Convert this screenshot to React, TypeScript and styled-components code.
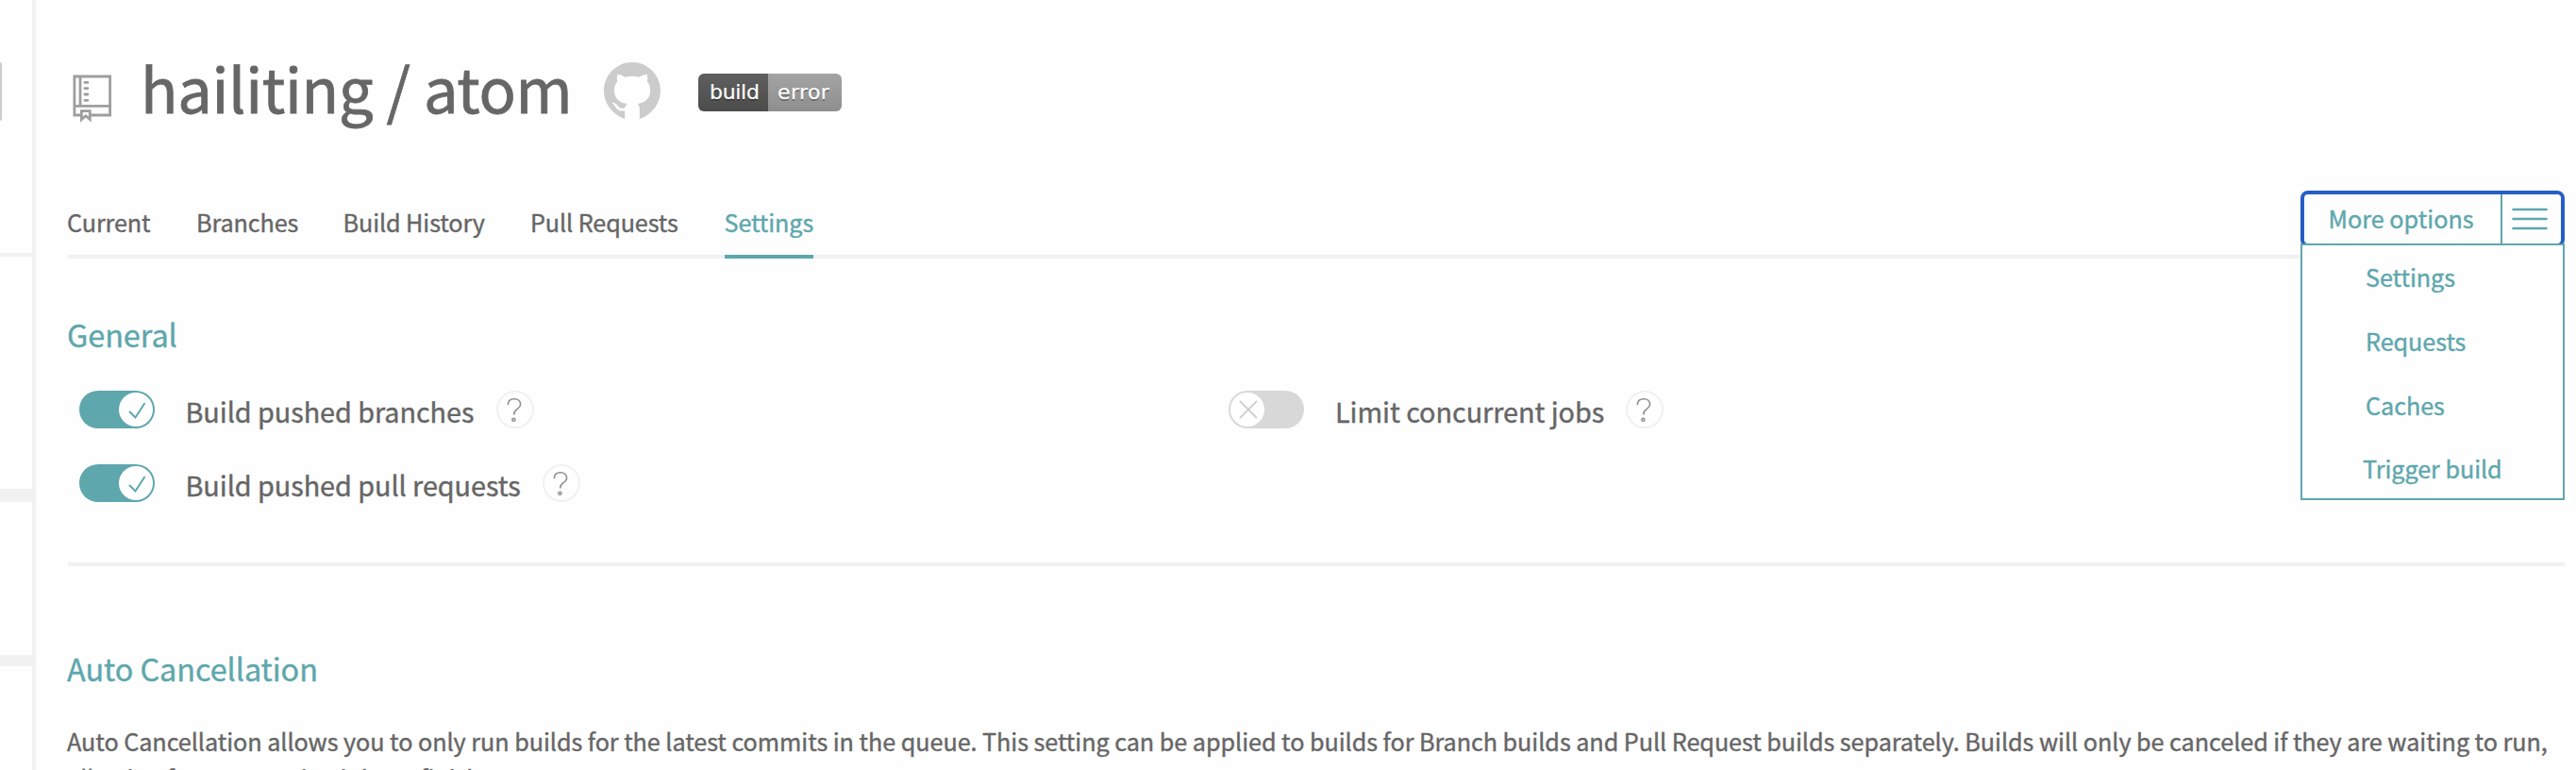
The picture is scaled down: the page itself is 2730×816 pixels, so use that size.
import React from 'react';
import styled, { createGlobalStyle, css } from 'styled-components';

const teal = '#5ea7ad';
const line = '#f1f1f1';
const ink = '#666666';

const GlobalStyle = createGlobalStyle`
  * { box-sizing: border-box; }
  html, body { margin: 0; padding: 0; background: #fefefe; overflow: hidden; }
  body {
    font-family: "Noto Sans CJK SC", "Noto Sans", sans-serif;
    font-size: 25.2px;
    color: ${ink};
    -webkit-text-stroke: 0.4px currentColor;
  }
`;

const Page = styled.div`
  display: flex;
  width: 2730px;
  height: 816px;
  overflow: hidden;
`;

const Sidebar = styled.aside`
  display: flex;
  flex-direction: column;
  flex: none;
  width: 38px;
  border-right: 4px solid ${line};
`;

const SidebarCard = styled.div<{ $height: number; $rule: number }>`
  flex: none;
  height: ${(p) => p.$height}px;
  border-bottom: ${(p) => p.$rule}px solid ${line};
`;

const SidebarButton = styled.div`
  width: 2px;
  height: 62px;
  margin-top: 66px;
  border-radius: 0 2px 2px 0;
  background: #cccccc;
`;

const Main = styled.main`
  flex: none;
  width: 2680px;
  padding: 0 0 0 34px;
`;

const Header = styled.header`
  display: flex;
  align-items: flex-start;
  height: 202px;
  padding-left: 5px;
`;

const BookIcon = styled.svg`
  flex: none;
  width: 40px;
  height: 50px;
  margin-top: 79px;
  overflow: visible;
  fill: none;
  stroke: #9e9e9e;
`;

const Title = styled.h1`
  width: 491px;
  margin: 47px 0 0 32px;
  font-size: 65px;
  line-height: 90px;
  font-weight: 400;
  letter-spacing: -0.3px;
  white-space: nowrap;
  -webkit-text-stroke-width: 0.8px;
`;

const GithubMark = styled.svg`
  flex: none;
  width: 60px;
  height: 60px;
  margin-top: 66px;
  fill: #cccccc;
`;

const Badge = styled.div`
  display: flex;
  width: 152px;
  height: 40px;
  margin: 78px 0 0 40px;
  border-radius: 6px;
  overflow: hidden;
  font-family: "DejaVu Sans", sans-serif;
  font-size: 22px;
  line-height: 40px;
  color: #ffffff;
  text-shadow: 0 2px 0 rgba(1, 1, 1, 0.3);
  -webkit-text-stroke-width: 0.2px;
`;

const BadgePart = styled.span<{ $dark?: boolean }>`
  width: ${(p) => (p.$dark ? 74 : 78)}px;
  padding-left: ${(p) => (p.$dark ? 12 : 10)}px;
  letter-spacing: ${(p) => (p.$dark ? -0.3 : 0.4)}px;
  background: ${(p) =>
    p.$dark ? 'linear-gradient(#606060, #4c4c4c)' : 'linear-gradient(#a4a4a4, #8e8e8e)'};
`;

const Nav = styled.nav`
  display: flex;
  justify-content: space-between;
  width: 2646px;
  height: 72px;
  border-bottom: 4px solid ${line};
`;

const Tabs = styled.div`
  display: grid;
  grid-template-columns: 137px 155.5px 198.5px 205px 94px;
  padding-top: 13px;
`;

const Tab = styled.a<{ $active?: boolean }>`
  height: 59px;
  margin-left: -1px;
  line-height: 40px;
  letter-spacing: -0.1px;
  white-space: nowrap;
  ${(p) =>
    p.$active &&
    css`
      margin-left: 0;
      color: ${teal};
      text-indent: -0.5px;
      border-bottom: 4px solid ${teal};
    `}
`;

const Options = styled.div`
  position: relative;
  width: 280px;
  color: ${teal};
`;

const OptionsButton = styled.button`
  display: flex;
  width: 280px;
  height: 60px;
  padding: 0;
  border: 4px solid #265ec4;
  border-radius: 8px;
  background: #fefefe;
  color: inherit;
  font: inherit;
  line-height: 51px;
  text-align: left;
`;

const OptionsLabel = styled.span`
  width: 210px;
  height: 52px;
  padding-left: 25.5px;
  border-right: 2px solid ${teal};
`;

const MenuIcon = styled.svg`
  width: 38px;
  height: 26px;
  margin: 13px 0 0 10px;
  stroke: ${teal};
  stroke-width: 2.6;
  stroke-linecap: round;
`;

const OptionsMenu = styled.ul`
  position: absolute;
  top: 56px;
  left: 0;
  width: 280px;
  height: 272px;
  margin: 0;
  padding: 13px 0 0 67px;
  list-style: none;
  border: 2px solid ${teal};
  background: #fefefe;
`;

const OptionsItem = styled.li<{ $last?: boolean }>`
  height: 68px;
  line-height: 40px;
  letter-spacing: -0.06px;
  white-space: nowrap;
  margin: ${(p) => (p.$last ? '-1px 0 0 -3px' : '0')};
`;

const General = styled.section`
  width: 2646px;
  height: 326px;
  padding-top: 60px;
  border-bottom: 4px solid ${line};
`;

const SectionTitle = styled.h2`
  margin: 0 0 0 -1px;
  font-size: 32.4px;
  line-height: 40px;
  letter-spacing: -0.05px;
  font-weight: 400;
  color: ${teal};
`;

const Settings = styled.div`
  display: grid;
  grid-template-columns: 1218px 1fr;
  row-gap: 38px;
  padding: 40px 0 0 12px;
`;

const Setting = styled.div`
  display: flex;
  height: 40px;
`;

const Switch = styled.button<{ $on?: boolean }>`
  display: flex;
  justify-content: ${(p) => (p.$on ? 'flex-end' : 'flex-start')};
  width: 80px;
  height: 40px;
  margin-right: ${(p) => (p.$on ? 0.5 : 1)}px;
  padding: 2px;
  border: 0;
  border-radius: 20px;
  background: ${(p) => (p.$on ? teal : '#d8d8d8')};
`;

const Knob = styled.svg<{ $on?: boolean }>`
  width: 36px;
  height: 36px;
  border-radius: 50%;
  background: #ffffff;
  fill: none;
  stroke: ${(p) => (p.$on ? teal : '#d0d0d0')};
  stroke-width: 2;
`;

const SettingLabel = styled.span`
  margin: 0 23.4px 0 32px;
  font-size: 28.8px;
  line-height: 43px;
  letter-spacing: -0.05px;
  white-space: nowrap;
`;

const Help = styled.svg`
  width: 40px;
  height: 40px;
  fill: none;
  stroke: #8f8f8f;
  stroke-width: 1.6;
`;

const AutoCancellation = styled.section`
  width: 2660px;
  padding-top: 88px;
`;

const Copy = styled.p`
  margin: 38px 0 0 -1px;
  line-height: 39.4px;
  letter-spacing: -0.05px;
  white-space: nowrap;
`;

function Toggle({ on }: { on?: boolean }) {
  return (
    <Switch $on={on}>
      <Knob $on={on} viewBox="0 0 36 36">
        {on ? <path d="M11 20 17.5 26.5 27.5 11" /> : <path d="M10 9 28 27M28 9 10 27" />}
      </Knob>
    </Switch>
  );
}

function SettingRow({ label, on }: { label: string; on?: boolean }) {
  return (
    <Setting>
      <Toggle on={on} />
      <SettingLabel>{label}</SettingLabel>
      <Help viewBox="0 0 40 40">
        <circle cx="20" cy="20" r="19" stroke={line} strokeWidth="2" />
        <path d="M12.3 15.2C12.3 11 15 8.8 19 8.8s6.6 2.4 6.6 5.9c0 4.6-6.8 5-6.8 9.8v1" />
        <circle cx="18.4" cy="30.7" r="1.5" />
      </Help>
    </Setting>
  );
}

export default function App() {
  return (
    <>
      <GlobalStyle />
      <Page>
        <Sidebar>
          <SidebarCard $height={272} $rule={4}>
            <SidebarButton />
          </SidebarCard>
          <SidebarCard $height={260} $rule={14} />
          <SidebarCard $height={174} $rule={12} />
        </Sidebar>
        <Main>
          <Header>
            <BookIcon viewBox="0 0 40 50" strokeWidth="2.8">
              <path d="M8.5 43H1.9V2H39.6V43H19.2M1.9 33.3H39.6M8 2V33.3" />
              <path d="M12.9 8.4h3M12.9 14.6h3M12.9 21h3M12.9 27.3h3" strokeLinecap="round" />
              <path d="M9.4 47.6V38.7H18.3V47.6L13.8 43.8Z" />
            </BookIcon>
            <Title>hailiting / atom</Title>
            <GithubMark viewBox="0 0 60 60">
              <path d="M30 0C13.4 0 0 13.5 0 30.2 0 43.7 9 55.2 22.2 60V51.4C15.5 52.4 13.5 49.8 11.8 46.5C10.8 44.7 9.5 43.9 8.2 42.9C10.5 42.2 13.3 43.6 15 46.3C16.9 49 19.3 49.3 22.4 48.2C22.7 46.3 23.6 44.9 24.7 44C17 43 11 39.2 11 29.5C11 25.5 12.3 22.8 14.4 20.3C13.7 18.3 13.5 15.5 14.6 12.7C17.2 12.6 20 14.1 22.5 15.7C27.3 14.5 33 14.5 37.6 15.7C40.2 14 43 12.7 45.6 12.7C46.6 15.5 46.5 18.2 45.8 20.3C48 22.8 49.2 25.5 49.2 29.5C49.2 39.2 43.2 43 35.5 44C37 45.2 37.9 47.5 37.9 50V60C51 55.2 60 43.7 60 30.2 60 13.5 46.6 0 30 0Z" />
            </GithubMark>
            <Badge>
              <BadgePart $dark>build</BadgePart>
              <BadgePart>error</BadgePart>
            </Badge>
          </Header>
          <Nav>
            <Tabs>
              <Tab>Current</Tab>
              <Tab>Branches</Tab>
              <Tab>Build History</Tab>
              <Tab>Pull Requests</Tab>
              <Tab $active>Settings</Tab>
            </Tabs>
            <Options>
              <OptionsButton>
                <OptionsLabel>More options</OptionsLabel>
                <MenuIcon viewBox="0 0 38 26">
                  <path d="M1.5 3H36.5M1.5 13H36.5M1.5 23H36.5" />
                </MenuIcon>
              </OptionsButton>
              <OptionsMenu>
                <OptionsItem>Settings</OptionsItem>
                <OptionsItem>Requests</OptionsItem>
                <OptionsItem>Caches</OptionsItem>
                <OptionsItem $last>Trigger build</OptionsItem>
              </OptionsMenu>
            </Options>
          </Nav>
          <General>
            <SectionTitle>General</SectionTitle>
            <Settings>
              <SettingRow on label="Build pushed branches" />
              <SettingRow label="Limit concurrent jobs" />
              <SettingRow on label="Build pushed pull requests" />
            </Settings>
          </General>
          <AutoCancellation>
            <SectionTitle>Auto Cancellation</SectionTitle>
            <Copy>
              Auto Cancellation allows you to only run builds for the latest commits in the queue. This setting can be
              applied to builds for Branch builds and Pull Request builds separately. Builds will only be canceled if
              they are waiting to run,
              <br />
              allowing for any running jobs to finish.
            </Copy>
          </AutoCancellation>
        </Main>
      </Page>
    </>
  );
}
